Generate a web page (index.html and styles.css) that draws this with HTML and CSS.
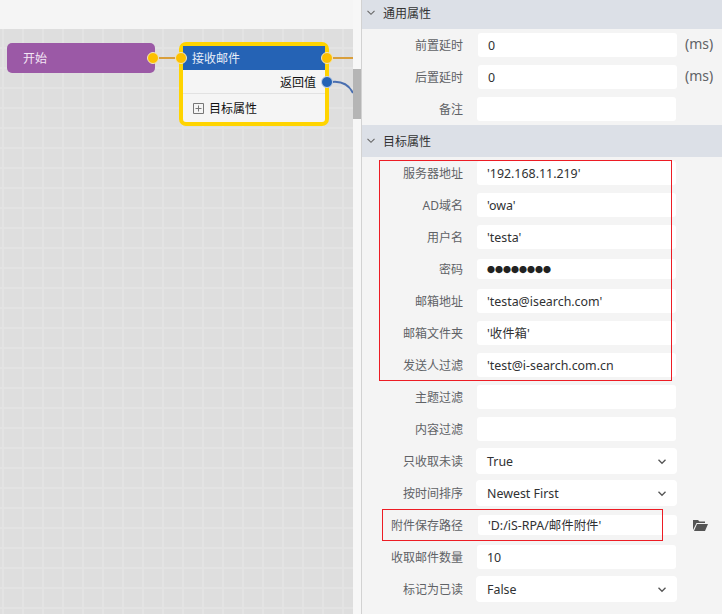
FILE: index.html
```html
<!DOCTYPE html>
<html lang="en">
<head>
  <meta charset="UTF-8" />
  <title>接收邮件</title>
  <link rel="stylesheet" href="styles.css">
</head>
<body>
  <div class="page">
    <div class="left">
      <div class="topbar"></div>
      <div class="canvas">
        <div class="node start">开始</div>
        <span class="port yellow p-start"></span>
        <span class="port yellow p-in"></span>
        <span class="port yellow p-out"></span>
        <span class="port blue p-ret"></span>

        <div class="node mail">
          <div class="mail-title">接收邮件</div>
          <div class="mail-ret">返回值</div>
          <div class="mail-attr">
            <svg class="plus" width="11" height="11" viewBox="0 0 11 11"><path d="M.5.5h10v10H.5zM2.5 5.5h6M5.5 2.5v6" fill="none" stroke="#777" /></svg>
            目标属性
          </div>
        </div>

        <svg class="wires" width="353" height="120" viewBox="0 0 353 120">
          <path d="M158 58H180M332 58H353" fill="none" stroke="#d99f3c" stroke-width="2" />
          <path d="M332 82C342 81 349 85 353 93" fill="none" stroke="#4a6fb0" stroke-width="2" />
        </svg>
      </div>
    </div>

    <div class="scrollbar"><div class="thumb"></div></div>

    <div class="panel">
      <div class="section-head first">
        <svg class="chev" width="8" height="6" viewBox="0 0 8 6"><path d="M.5.8 4 4.300 7.500.8" fill="none" stroke="#666" stroke-width="1.100" /></svg>
        <span>通用属性</span>
      </div>
      <div class="row"><label>前置延时</label><div class="ctl shifted">0</div><span class="unit">(ms)</span></div>
      <div class="row"><label>后置延时</label><div class="ctl shifted">0</div><span class="unit">(ms)</span></div>
      <div class="row"><label>备注</label><div class="ctl"></div></div>

      <div class="section-head">
        <svg class="chev" width="8" height="6" viewBox="0 0 8 6"><path d="M.5.8 4 4.300 7.500.8" fill="none" stroke="#666" stroke-width="1.100" /></svg>
        <span>目标属性</span>
      </div>
      <div class="row"><label>服务器地址</label><div class="ctl">'192.168.11.219'</div></div>
      <div class="row"><label>AD域名</label><div class="ctl">'owa'</div></div>
      <div class="row"><label>用户名</label><div class="ctl">'testa'</div></div>
      <div class="row"><label>密码</label><div class="ctl short dots">●●●●●●●●</div></div>
      <div class="row"><label>邮箱地址</label><div class="ctl">'testa@isearch.com'</div></div>
      <div class="row"><label>邮箱文件夹</label><div class="ctl">'收件箱'</div></div>
      <div class="row"><label>发送人过滤</label><div class="ctl">'test@i-search.com.cn</div></div>
      <div class="row"><label>主题过滤</label><div class="ctl"></div></div>
      <div class="row"><label>内容过滤</label><div class="ctl"></div></div>
      <div class="row"><label>只收取未读</label><div class="ctl select">True<svg width="8" height="6" viewBox="0 0 8 6"><path d="M.5.8 4 4.300 7.500.8" fill="none" stroke="#555" stroke-width="1.300" /></svg></div></div>
      <div class="row"><label>按时间排序</label><div class="ctl select">Newest First<svg width="8" height="6" viewBox="0 0 8 6"><path d="M.5.8 4 4.300 7.500.8" fill="none" stroke="#555" stroke-width="1.300" /></svg></div></div>
      <div class="row"><label>附件保存路径</label><div class="ctl short shifted">'D:/iS-RPA/邮件附件'</div>
        <svg class="folder" width="15" height="12" viewBox="0 0 15 12"><path d="M0 11V1h5l1.500 1.500H12V4H3.500z M1 12 4 5h11l-3 7z" fill="#555" /></svg>
      </div>
      <div class="row"><label>收取邮件数量</label><div class="ctl">10</div></div>
      <div class="row"><label>标记为已读</label><div class="ctl select">False<svg width="8" height="6" viewBox="0 0 8 6"><path d="M.5.8 4 4.300 7.500.8" fill="none" stroke="#555" stroke-width="1.300" /></svg></div></div>

      <div class="redbox box-a"></div>
      <div class="redbox box-b"></div>
    </div>
  </div>
</body>
</html>
```

FILE: styles.css
```css
* {
  box-sizing: border-box;
}
body {
  margin: 0;
  font-family: "Noto Sans", "Noto Sans CJK SC", sans-serif;
  font-size: 12px;
  background-color: #f4f4f4;
}
.page {
  display: flex;
  width: 722px;
  height: 614px;
  overflow: hidden;
}

/* left side, flow canvas */
.left {
  width: 353px;
  flex: none;
}
.topbar {
  height: 29px;
  background: #f5f5f5;
}
.canvas {
  position: relative;
  height: 585px;
  background-color: #dedede;
  background-image:
    linear-gradient(to right, #e3e3e3 2px, transparent 2px),
    linear-gradient(to bottom, #e3e3e3 2px, transparent 2px);
  background-size: 20px 20px;
  background-position: 2px 18px;
}
.wires {
  position: absolute;
  left: 0;
  top: -29px;
}
.node {
  position: absolute;
}
.start {
  left: 7px;
  top: 14px;
  width: 148px;
  height: 30px;
  padding-left: 16px;
  line-height: 31px;
  color: #f3e6f5;
  background: #9b59a6;
  border-radius: 5px;
}
.mail {
  left: 179px;
  top: 13px;
  width: 150px;
  height: 84px;
  border: 4px solid #ffd400;
  border-radius: 7px;
  background: #f5f5f5;
  color: #111;
}
.mail-title {
  height: 24px;
  padding-left: 9px;
  line-height: 25px;
  color: #e8eef8;
  background: #2563b5;
}
.mail-ret {
  height: 24px;
  padding-right: 9px;
  line-height: 25px;
  text-align: right;
  border-bottom: 1px solid #e2e2e2;
}
.mail-attr {
  display: flex;
  align-items: center;
  gap: 5px;
  height: 28px;
  padding-left: 10px;
}
.port {
  position: absolute;
  z-index: 2;
  width: 12px;
  height: 12px;
  border-radius: 50%;
  border: 1px solid #f2e6c0;
}
.yellow { background: #fdc000; }
.blue { background: #2563b5; border-color: #c8d4e8; }
.p-start { left: 147px; top: 23px; }
.p-in { left: 175px; top: 23px; }
.p-out { left: 321px; top: 23px; }
.p-ret { left: 321px; top: 47px; }

.scrollbar {
  width: 8px;
  flex: none;
  padding-top: 69px;
  background: #f7f7f7;
}
.thumb {
  height: 50px;
  background: #b5b5b5;
}

/* right side, properties */
.panel {
  position: relative;
  flex: 1;
  border-left: 1px solid #d2d2d2;
  background: #f4f4f4;
}
.section-head {
  display: flex;
  align-items: center;
  height: 32px;
  padding: 0 0 1px 5px;
  color: #333;
  background: #dce0e7;
}
.section-head.first {
  margin-top: -3px;
}
.chev {
  margin-right: 8px;
}
.row {
  display: flex;
  align-items: center;
  height: 32px;
}
.row label {
  width: 101px;
  flex: none;
  text-align: right;
  color: #606266;
}
.ctl {
  width: 199px;
  height: 24px;
  flex: none;
  margin-left: 14px;
  padding: 1px 0 0 10px;
  font-size: 12.4px;
  line-height: 24px;
  color: #303133;
  background: #fff;
  border-radius: 3px;
}
.shifted {
  margin-left: 15px;
}
.short {
  height: 20px;
  line-height: 20px;
}
.dots {
  font-size: 8px;
  color: #222;
}
.select {
  display: flex;
  align-items: center;
  justify-content: space-between;
  width: 201px;
  height: 26px;
  margin-left: 13px;
  padding: 1px 11px 0;
  border-radius: 4px;
}
.unit {
  margin-left: 8px;
  padding-bottom: 4px;
  font-size: 14px;
  color: #606266;
}
.folder {
  margin-left: 16px;
}

/* red annotation boxes */
.redbox {
  position: absolute;
  border: 1px solid #ed1c24;
  pointer-events: none;
}
.box-a {
  left: 17px;
  top: 160px;
  width: 293px;
  height: 221px;
}
.box-b {
  left: 20px;
  top: 509px;
  width: 281px;
  height: 32px;
}
```
